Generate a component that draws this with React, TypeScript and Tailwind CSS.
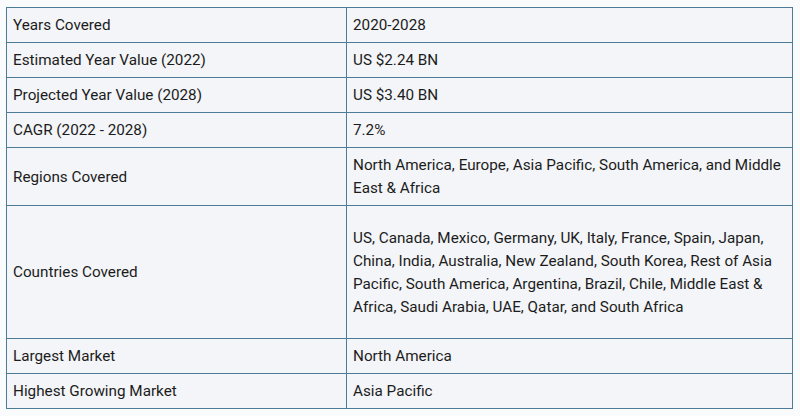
import React from 'react';

const rows: { label: string; value: string; tall?: boolean }[] = [
  { label: 'Years Covered', value: '2020-2028' },
  { label: 'Estimated Year Value (2022)', value: 'US $2.24 BN' },
  { label: 'Projected Year Value (2028)', value: 'US $3.40 BN' },
  { label: 'CAGR (2022 - 2028)', value: '7.2%' },
  {
    label: 'Regions Covered',
    value: 'North America, Europe, Asia Pacific, South America, and Middle East & Africa',
  },
  {
    label: 'Countries Covered',
    value:
      'US, Canada, Mexico, Germany, UK, Italy, France, Spain, Japan, China, India, Australia, New Zealand, South Korea, Rest of Asia Pacific, South America, Argentina, Brazil, Chile, Middle East & Africa, Saudi Arabia, UAE, Qatar, and South Africa',
    tall: true,
  },
  { label: 'Largest Market', value: 'North America' },
  { label: 'Highest Growing Market', value: 'Asia Pacific' },
];

const App = () => {
  return (
    <div
      className="w-[800px] h-[416px] bg-[#fafbfc] pt-[7px] pl-[6px]"
      style={{ fontFamily: 'Roboto, "Liberation Sans", sans-serif' }}
    >
      <table className="w-[787px] border-collapse bg-[#f3f5f8] text-[15.25px] text-[#1c1c1c]">
        <tbody>
          {rows.map((row) => (
            <tr key={row.label}>
              <td className="w-[340px] border border-[#4d7c99] pl-[6px] pr-[4px] pt-[6px] pb-[5px] leading-[23px] align-middle">
                {row.label}
              </td>
              <td
                className={
                  row.tall
                    ? 'border border-[#4d7c99] pl-[6px] pr-[4px] pt-[21px] pb-[19px] leading-[23px] align-middle'
                    : 'border border-[#4d7c99] pl-[6px] pr-[4px] pt-[6px] pb-[5px] leading-[23px] align-middle'
                }
              >
                {row.value}
              </td>
            </tr>
          ))}
        </tbody>
      </table>
    </div>
  );
};

export default App;
